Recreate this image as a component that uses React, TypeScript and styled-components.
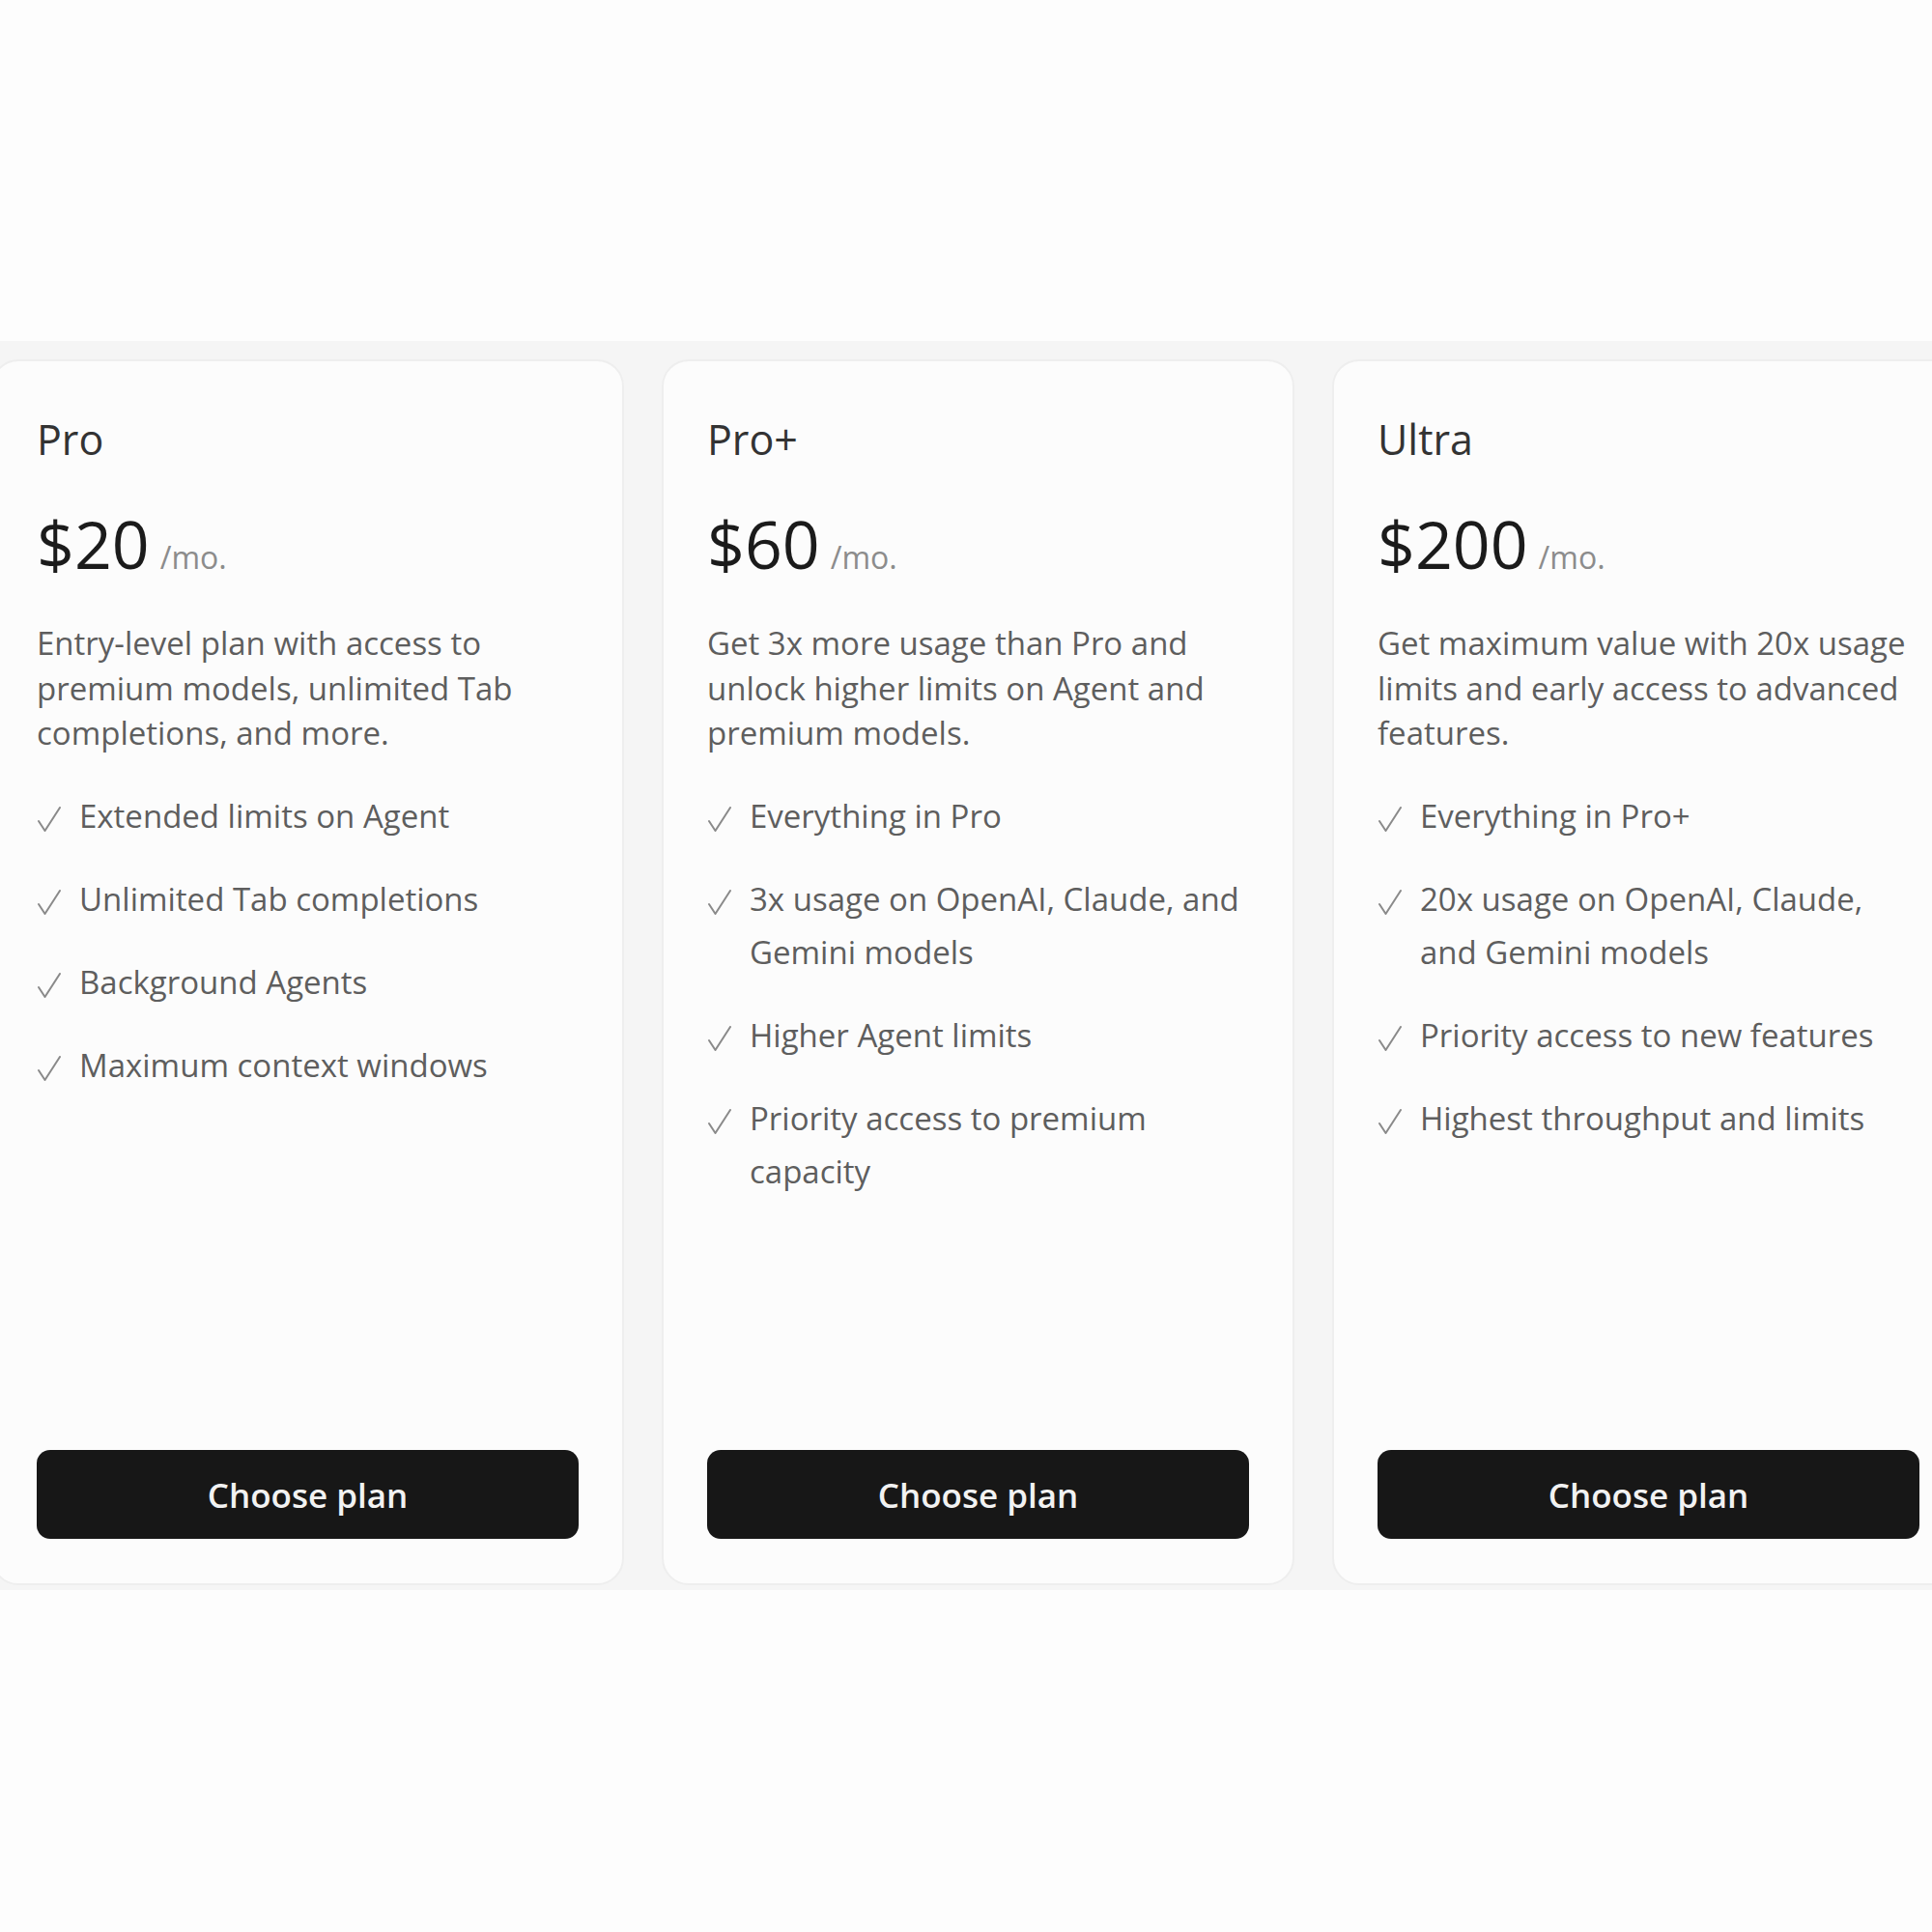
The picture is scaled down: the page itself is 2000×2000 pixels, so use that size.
import React from "react";
import styled, { createGlobalStyle } from "styled-components";

type Plan = {
  name: string;
  price: string;
  blurb: string;
  features: string[];
};

const plans: Plan[] = [
  {
    name: "Pro",
    price: "$20",
    blurb: "Entry-level plan with access to premium models, unlimited Tab completions, and more.",
    features: [
      "Extended limits on Agent",
      "Unlimited Tab completions",
      "Background Agents",
      "Maximum context windows",
    ],
  },
  {
    name: "Pro+",
    price: "$60",
    blurb: "Get 3x more usage than Pro and unlock higher limits on Agent and premium models.",
    features: [
      "Everything in Pro",
      "3x usage on OpenAI, Claude, and Gemini models",
      "Higher Agent limits",
      "Priority access to premium capacity",
    ],
  },
  {
    name: "Ultra",
    price: "$200",
    blurb: "Get maximum value with 20x usage limits and early access to advanced features.",
    features: [
      "Everything in Pro+",
      "20x usage on OpenAI, Claude, and Gemini models",
      "Priority access to new features",
      "Highest throughput and limits",
    ],
  },
];

const GlobalStyle = createGlobalStyle`
  html, body {
    margin: 0;
    padding: 0;
    background: #fdfdfd;
  }
  body {
    font-family: "Open Sans", "Noto Sans", sans-serif;
    -webkit-font-smoothing: antialiased;
  }
`;

const Page = styled.main`
  width: 2000px;
  height: 2000px;
  box-sizing: border-box;
  padding-top: 353px;
  overflow: hidden;
  background: #fdfdfd;
`;

const Strip = styled.section`
  background: #f5f5f5;
  padding: 19px 0 5px;
  overflow: hidden;
`;

// carousel track, scrolled a few px so the first card is cut at the left edge
const Track = styled.div`
  display: flex;
  gap: 39px;
  margin-left: -9px;
`;

const Card = styled.article`
  flex: 0 0 655px;
  height: 1269px;
  box-sizing: border-box;
  display: flex;
  flex-direction: column;
  padding: 56px 45px 46px;
  background: #fcfcfc;
  border: 2px solid #eeeeee;
  border-radius: 28px;
`;

const Title = styled.h2`
  margin: 0;
  font-size: 43px;
  line-height: 50px;
  font-weight: 400;
  color: #333333;
`;

const PriceRow = styled.div`
  display: flex;
  align-items: baseline;
  gap: 11px;
  margin-top: 49px;
`;

const Amount = styled.span`
  font-size: 68px;
  line-height: 68px;
  font-weight: 400;
  color: #1b1b1b;
`;

const Per = styled.span`
  font-size: 32px;
  color: #8c8c8c;
`;

const Blurb = styled.p`
  margin: 45px 0 0;
  font-size: 33px;
  line-height: 46.5px;
  color: #5e5e5e;
`;

const Features = styled.ul`
  list-style: none;
  margin: 34px 0 0;
  padding: 0;
  display: flex;
  flex-direction: column;
  gap: 31px;
`;

const Feature = styled.li`
  display: flex;
  align-items: flex-start;
  gap: 19px;
  font-size: 33px;
  line-height: 55px;
  color: #5e5e5e;
`;

const Tick = styled.svg`
  flex: 0 0 25px;
  margin-top: 18px;
`;

const ChooseButton = styled.button`
  margin-top: auto;
  height: 92px;
  width: 100%;
  border: 0;
  border-radius: 14px;
  background: #171717;
  color: #f2f2f2;
  font-family: inherit;
  font-size: 35px;
  font-weight: 600;
  cursor: pointer;
`;

const Check = () => (
  <Tick width="25" height="26" viewBox="0 0 25 26" fill="none">
    <path d="M2 15 L8.5 25 L24 1" stroke="#8a8a8a" strokeWidth="2" strokeLinecap="round" strokeLinejoin="round" />
  </Tick>
);

const PlanCard = ({ plan }: { plan: Plan }) => (
  <Card>
    <Title>{plan.name}</Title>
    <PriceRow>
      <Amount>{plan.price}</Amount>
      <Per>/mo.</Per>
    </PriceRow>
    <Blurb>{plan.blurb}</Blurb>
    <Features>
      {plan.features.map((f) => (
        <Feature key={f}>
          <Check />
          <span>{f}</span>
        </Feature>
      ))}
    </Features>
    <ChooseButton>Choose plan</ChooseButton>
  </Card>
);

export default function App() {
  return (
    <>
      <GlobalStyle />
      <Page>
        <Strip>
          <Track>
            {plans.map((p) => (
              <PlanCard key={p.name} plan={p} />
            ))}
          </Track>
        </Strip>
      </Page>
    </>
  );
}
